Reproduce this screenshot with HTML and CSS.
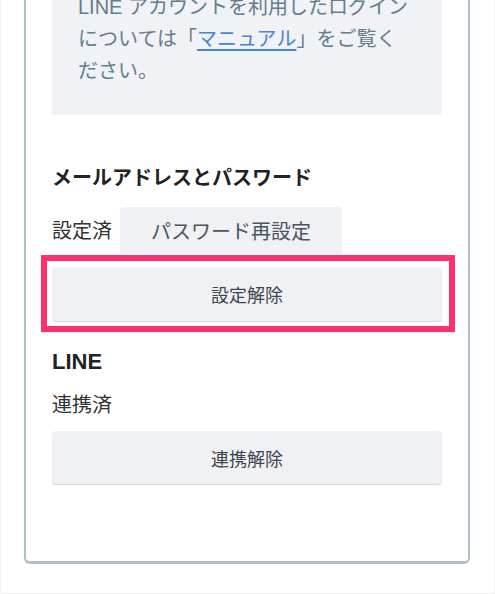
FILE: index.html
```html
<!DOCTYPE html>
<html lang="ja">
<head>
<meta charset="utf-8">
<link rel="stylesheet" href="styles.css">
</head>
<body>
<div class="frame">
  <div class="card">
    <div class="info">LINE アカウントを利用したログインについては「<a class="link" href="#">マニュアル</a>」をご覧ください。</div>

    <h2 class="heading heading-mail">メールアドレスとパスワード</h2>
    <div class="status-row">
      <span class="label">設定済</span>
      <button class="btn btn-inline">パスワード再設定</button>
    </div>
    <div class="highlight-wrap">
      <button class="btn btn-block">設定解除</button>
      <span class="highlight"></span>
    </div>

    <h2 class="heading heading-line">LINE</h2>
    <div class="label label-line">連携済</div>
    <button class="btn btn-block btn-unlink">連携解除</button>
  </div>
</div>
</body>
</html>
```

FILE: styles.css
```css
* { box-sizing: border-box; }
html, body { margin: 0; padding: 0; background: #fff; }
body {
  font-family: "Liberation Sans", "Noto Sans CJK JP", sans-serif;
  overflow: hidden;
}
.frame {
  width: 495px;
  height: 594px;
  border: 1px solid #eef0f2;
  border-top: none;
  padding-left: 23px;
  overflow: hidden;
}
.card {
  width: 446px;
  margin-top: -63px;
  border: 2px solid #b0c0c9;
  border-bottom-width: 3px;
  border-radius: 6px;
  padding: 24px 26px 77px;
  display: flex;
  flex-direction: column;
}
.info {
  background: #f0f2f5;
  color: #647c8b;
  font-size: 20px;
  line-height: 32px;
  padding: 28px 26px;
}
.link {
  color: #4a86d0;
  text-decoration: underline;
  text-underline-offset: 3px;
}
.heading {
  margin: 0;
  font-size: 20px;
  line-height: 30px;
  font-weight: 700;
  color: #222;
}
.heading-mail { margin-top: 48px; }
.heading-line { margin-top: 26px; font-size: 22px; }
.status-row {
  margin-top: 14px;
  display: flex;
  align-items: center;
  gap: 8px;
}
.label {
  font-size: 20px;
  line-height: 30px;
  color: #333;
}
.label-line { margin-top: 13px; }
.btn {
  font-family: "Liberation Sans", "Noto Sans CJK JP", sans-serif;
  border: none;
  background: #f0f1f4;
  border-radius: 4px;
  margin: 0;
  padding: 0;
  cursor: pointer;
}
.btn-inline {
  height: 47px;
  padding: 0 31px;
  font-size: 20px;
  color: #4b555e;
  border-radius: 4px 4px 0 0;
}
.btn-block {
  width: 100%;
  font-size: 18px;
  color: #3e454c;
  box-shadow: 0 1px 1px rgba(0, 0, 0, 0.16);
}
.highlight-wrap {
  position: relative;
  margin-top: 13px;
  display: flex;
}
.highlight-wrap .btn-block { height: 54px; }
.highlight {
  position: absolute;
  top: -12px;
  bottom: -11px;
  left: -11px;
  right: -13px;
  border: 6px solid #ff2f6e;
  pointer-events: none;
}
.btn-unlink {
  margin-top: 11px;
  height: 53px;
}
```
